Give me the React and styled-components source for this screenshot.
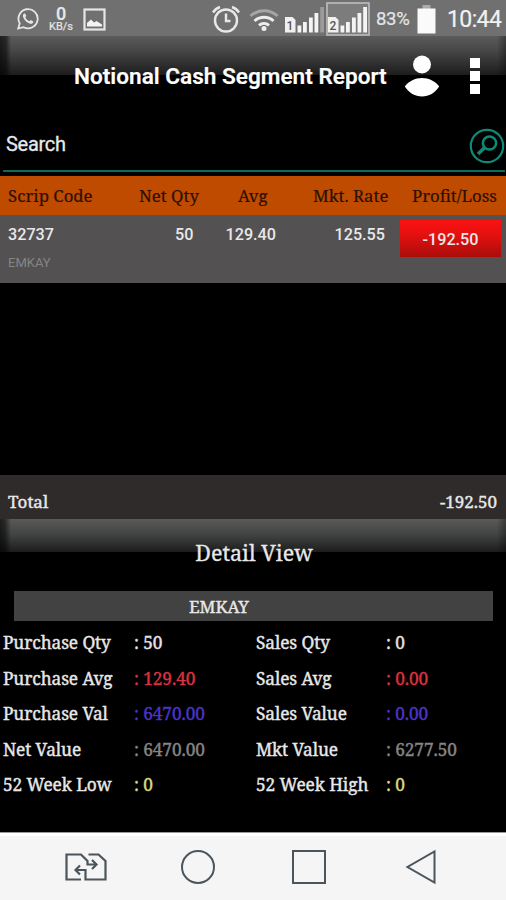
import React from 'react';
import styled, {createGlobalStyle} from 'styled-components';

const SERIF = '"Noto Serif", "Droid Serif", "DejaVu Serif Condensed", "DejaVu Serif", serif';

const headings = ['Scrip Code', 'Net Qty', 'Avg', 'Mkt. Rate', 'Profit/Loss'];

const details = [
    {label: 'Purchase Qty', value: '50', label2: 'Sales Qty', value2: '0', color: '#e4e4e4'},
    {label: 'Purchase Avg', value: '129.40', label2: 'Sales Avg', value2: '0.00', color: '#dc3140'},
    {label: 'Purchase Val', value: '6470.00', label2: 'Sales Value', value2: '0.00', color: '#4a35c8'},
    {label: 'Net Value', value: '6470.00', label2: 'Mkt Value', value2: '6277.50', color: '#858585'},
    {label: '52 Week Low', value: '0', label2: '52 Week High', value2: '0', color: '#d3dc86'},
];

const StatusIcons = () => (
    <StatusBar>
        <svg width="22" height="22" viewBox="0 0 22 22" fill="none" stroke="#e6e6e6">
            <path d="M1.2 20.6 2.7 15.4A9.6 9.6 0 1 1 6.6 19.2Z" strokeWidth="1.8"/>
            <path d="M7.2 5.6c-1.4.9-1.6 2.3-.9 3.9 1.2 2.9 3.4 5 6.3 6.1 1.5.6 2.9.2 3.6-1.1l.1-1-2.5-1.6-1.4 1.4c-1.9-.8-3.3-2.2-4.1-4l1-1.3-1.1-2.5z" fill="#e6e6e6" stroke="none"/>
        </svg>
        <Speed><b>0</b><span>KB/s</span></Speed>
        <svg width="23" height="23" viewBox="0 0 23 23">
            <rect x="1.5" y="1.5" width="20" height="20" fill="none" stroke="#e6e6e6" strokeWidth="2.2"/>
            <path d="M4 18.500v-3.500l4-3.500 3 3 2.500-1.500 5.500 3.500v2z" fill="#f4f4f4"/>
        </svg>
        <Spacer/>
        <svg width="30" height="30" viewBox="0 0 30 30" fill="none" stroke="#e8e8e8" strokeWidth="2.4">
            <circle cx="15" cy="16.5" r="11"/>
            <path d="M15 9.500v7.500h4.500M2 8.500Q4.500 4.500 9 3M28 8.500Q25.500 4.500 21 3"/>
        </svg>
        <Wifi width="30" height="25" viewBox="0 0 30 25" fill="none" strokeWidth="3">
            <path d="M1.5 9a20 20 0 0 1 27 0" stroke="#a5a5a5"/>
            <path d="M5.5 14a14 14 0 0 1 19 0M10 18.300a8 8 0 0 1 10 0" stroke="#eee"/>
            <circle cx="15" cy="21.5" r="2.5" fill="#eee"/>
        </Wifi>
        <Signal number="1"/>
        <Signal number="2" boxed/>
        <Percent>83%</Percent>
        <svg width="19" height="29" viewBox="0 0 19 29">
            <path d="M5.5 0h8v4h-8z" fill="#aaa"/>
            <path d="M.5 3.5h18v25H.5z" fill="#fafafa"/>
        </svg>
        <Clock>10:44</Clock>
    </StatusBar>
);

const Signal = ({number, boxed}) => (
    <SignalSvg width="44" height="34" viewBox="0 0 44 34" $boxed={boxed}>
        {boxed && <rect x="1" y="1" width="42" height="32" fill="#7c7c7c" stroke="#bdbdbd" strokeWidth="1.6"/>}
        <path d="M2 15h7.500l3 3v12.500H2z" fill="#f0f0f0"/>
        <text x="6.8" y="27.5" textAnchor="middle" fontFamily="Roboto" fontWeight="500" fontSize="12" fill="#555">{number}</text>
        <path d="M14.500 23.500h3.800v7h-3.800zM20 20h3.800v10.500H20zM26 15.500h3.800v15H26zM31.500 11h3.800v19.500h-3.800z" fill="#f4f4f4"/>
        <path d="M37.200 5H41v25.500h-3.800z" fill={boxed ? '#f4f4f4' : '#9b9b9b'}/>
    </SignalSvg>
);

const App = () => (
    <>
        <GlobalStyle/>
        <Screen>
            <StatusIcons/>
            <Header>
                <Title>Notional Cash Segment Report</Title>
                <svg width="36" height="44" viewBox="0 0 36 44" fill="#fff">
                    <circle cx="18" cy="10.5" r="9"/>
                    <path d="M.8 32.500C5 27 11 24 18 24S31 27 35.200 32.500C31 39 25 42.500 18 42.500S5 39 .8 32.500z"/>
                </svg>
                <Menu><i/><i/><i/></Menu>
            </Header>
            <SearchRow>
                <span>Search</span>
                <svg width="36" height="36" viewBox="0 0 36 36" fill="none" stroke="#0e8a78">
                    <circle cx="18" cy="18" r="16.2" strokeWidth="2.2"/>
                    <circle cx="20.5" cy="15" r="6.6" strokeWidth="2.5"/>
                    <path d="M15.800 19.500 9 26" strokeWidth="3.6"/>
                </svg>
            </SearchRow>
            <TableHead>
                {headings.map(item => <span key={item}>{item}</span>)}
            </TableHead>
            <TableRow>
                <Scrip>32737<small>EMKAY</small></Scrip>
                <Num>50</Num>
                <Num>129.40</Num>
                <Num>125.55</Num>
                <Loss>-192.50</Loss>
            </TableRow>
            <Total>
                <span>Total</span>
                <span>-192.50</span>
            </Total>
            <DetailHead>Detail View</DetailHead>
            <ScripBar>EMKAY</ScripBar>
            <DetailList>
                {details.map(item => (
                    <DetailRow key={item.label}>
                        <span>{item.label}</span>
                        <Value $color={item.color}>: {item.value}</Value>
                        <span>{item.label2}</span>
                        <Value $color={item.color}>: {item.value2}</Value>
                    </DetailRow>
                ))}
            </DetailList>
            <NavBar>
                <svg width="42" height="30" viewBox="0 0 42 30" fill="none" stroke="#4a555c" strokeWidth="2.2">
                    <path d="M16 27.500H1.500v-25H16L22.500 9v3.500h8M27 8l4.500 4.500L27 17"/>
                    <path d="M23.500 2.500h10l7 6.500v18.500h-20V18h-10M15 13.500 10.500 18l4.500 4.500"/>
                </svg>
                <svg width="36" height="36" viewBox="0 0 36 36" fill="none" stroke="#4a555c" strokeWidth="2">
                    <circle cx="18" cy="18" r="16"/>
                </svg>
                <svg width="36" height="36" viewBox="0 0 36 36" fill="none" stroke="#4a555c" strokeWidth="2">
                    <path d="M2 2h32v32H2z"/>
                </svg>
                <svg width="36" height="36" viewBox="0 0 36 36" fill="none" stroke="#4a555c" strokeWidth="2">
                    <path d="M31.500 2.500v31L4.500 18z"/>
                </svg>
            </NavBar>
        </Screen>
    </>
);

const GlobalStyle = createGlobalStyle`
  body {
    margin: 0;
    background: #000;
  }

  * {
    box-sizing: border-box;
  }

  svg {
    display: block;
    flex-shrink: 0;
  }
`;

const Screen = styled.main`
  width: 506px;
  height: 900px;
  display: flex;
  flex-direction: column;
  overflow: hidden;
  background: #000;
  color: #e8e8e8;
  font-family: Roboto, sans-serif;
  white-space: nowrap;

  > * {
    flex-shrink: 0;
  }
`;

const StatusBar = styled.div`
  height: 36px;
  display: flex;
  align-items: center;
  padding: 2px 0 0 17px;
  background: #707070;
`;

const Speed = styled.div`
  width: 26px;
  margin: 0 9px;
  display: flex;
  flex-direction: column;
  align-items: center;
  font-size: 11px;
  line-height: 12px;
  -webkit-text-stroke: 0.2px;

  b {
    font-size: 18px;
    font-weight: 500;
    line-height: 15px;
  }
`;

const Spacer = styled.div`
  flex: 1;
`;

const Wifi = styled.svg`
  margin: 0 4px 0 8px;
`;

const SignalSvg = styled.svg`
  margin: ${p => p.$boxed ? '0 6px 1px -1px' : '0'};
`;

const Percent = styled.span`
  width: 34px;
  margin-right: 7px;
  font-size: 18.5px;
  letter-spacing: -0.3px;
  color: #e6e6e6;
  -webkit-text-stroke: 0.2px;
`;

const Clock = styled.span`
  width: 59px;
  margin-left: 11px;
  font-size: 23px;
  letter-spacing: -0.6px;
  color: #f0f0f0;
  -webkit-text-stroke: 0.2px;
`;

const Header = styled.header`
  height: 76px;
  display: flex;
  align-items: flex-start;
  padding: 18px 25px 0 74px;
  background: linear-gradient(90deg, #000a 0, #0008 6px, #0000 11px, #0000 497px, #0005 506px) 0 0 / 100% 39px no-repeat,
  linear-gradient(#5b5b5b, #484848 35%, #1c1c1c) 0 0 / 100% 39px no-repeat;
`;

const Title = styled.h1`
  width: 330px;
  margin: 8px 0 0;
  font-size: 22.6px;
  font-weight: 600;
  line-height: 30px;
  color: #fff;
  -webkit-text-stroke: 0.2px;
`;

const Menu = styled.div`
  display: grid;
  gap: 3px;
  margin: 4px 0 0 30px;

  i {
    width: 10px;
    height: 10px;
    background: #fff;
  }
`;

const SearchRow = styled.div`
  height: 60px;
  margin: 0 1px 4px 3px;
  padding: 9px 0 0 3px;
  display: flex;
  align-items: center;
  justify-content: space-between;
  border-bottom: 2px solid #0b6c5c;
  font-size: 20px;
  -webkit-text-stroke: 0.3px;

  span {
    margin-top: -4px;
    letter-spacing: -0.3px;
  }
`;

const TableHead = styled.div`
  height: 39px;
  padding-left: 8px;
  display: grid;
  grid-template-columns: 131px 99px 75px 99px 90px;
  align-items: center;
  background: #be4b00;
  color: #2c1000;
  font-family: ${SERIF};
  font-size: 16.8px;
  -webkit-text-stroke: 0.2px;
`;

const TableRow = styled.div`
  height: 68px;
  margin-bottom: 192px;
  padding: 5px 5px 0 8px;
  display: grid;
  grid-template-columns: 91.5px 94px 82.5px 109px 101px;
  justify-content: start;
  align-items: start;
  background: #535151;
  font-size: 16.2px;
  font-weight: 500;
  line-height: 29px;
`;

const Scrip = styled.div`
  small {
    display: block;
    font-size: 13px;
    font-weight: 400;
    line-height: 27px;
    color: #858585;
  }
`;

const Num = styled.span`
  text-align: right;
`;

const Loss = styled.span`
  width: 101px;
  height: 37px;
  margin-left: 15px;
  line-height: 39px;
  text-align: center;
  background: linear-gradient(#fb1212, #e51010 40%, #a90d0a);
`;

const Total = styled.div`
  height: 44px;
  padding: 10px 9px 0 8px;
  display: flex;
  justify-content: space-between;
  background: #2f2b2a;
  font-family: ${SERIF};
  font-size: 17px;
  line-height: 34px;
  -webkit-text-stroke: 0.4px;
`;

const DetailHead = styled.h2`
  height: 72px;
  margin: 0;
  padding: 17px 0 0 2px;
  font-family: ${SERIF};
  font-size: 21.5px;
  font-weight: 400;
  line-height: 34px;
  text-align: center;
  -webkit-text-stroke: 0.3px;
  background: linear-gradient(90deg, #000a 0, #0008 5px, #0000 11px, #0000 497px, #0005 506px) 0 0 / 100% 33px no-repeat,
  linear-gradient(#585b5a, #434544 45%, #1c1c1c) 0 0 / 100% 33px no-repeat;
`;

const ScripBar = styled.div`
  height: 30px;
  margin: 0 13px 0 14px;
  padding-left: 175px;
  font-family: ${SERIF};
  font-size: 17px;
  line-height: 31px;
  -webkit-text-stroke: 0.4px;
  background: #424242;
`;

const DetailList = styled.div`
  height: 211px;
  padding: 4px 0 0 3px;
  font-family: ${SERIF};
  font-size: 17.3px;
  letter-spacing: -0.1px;
  -webkit-text-stroke: 0.4px;
`;

const DetailRow = styled.div`
  display: grid;
  grid-template-columns: 131px 122px 130px 120px;
  line-height: 35.6px;
`;

const Value = styled.span`
  color: ${p => p.$color};
`;

const NavBar = styled.nav`
  height: 68px;
  display: grid;
  grid-template-columns: 115px 111px 112px 36px;
  align-items: center;
  padding: 1px 0 0 65px;
  border-top: 1px solid #9a9a9a;
  background: linear-gradient(#fff 3px, #f5f5f5 3px);
`;

export default App;
